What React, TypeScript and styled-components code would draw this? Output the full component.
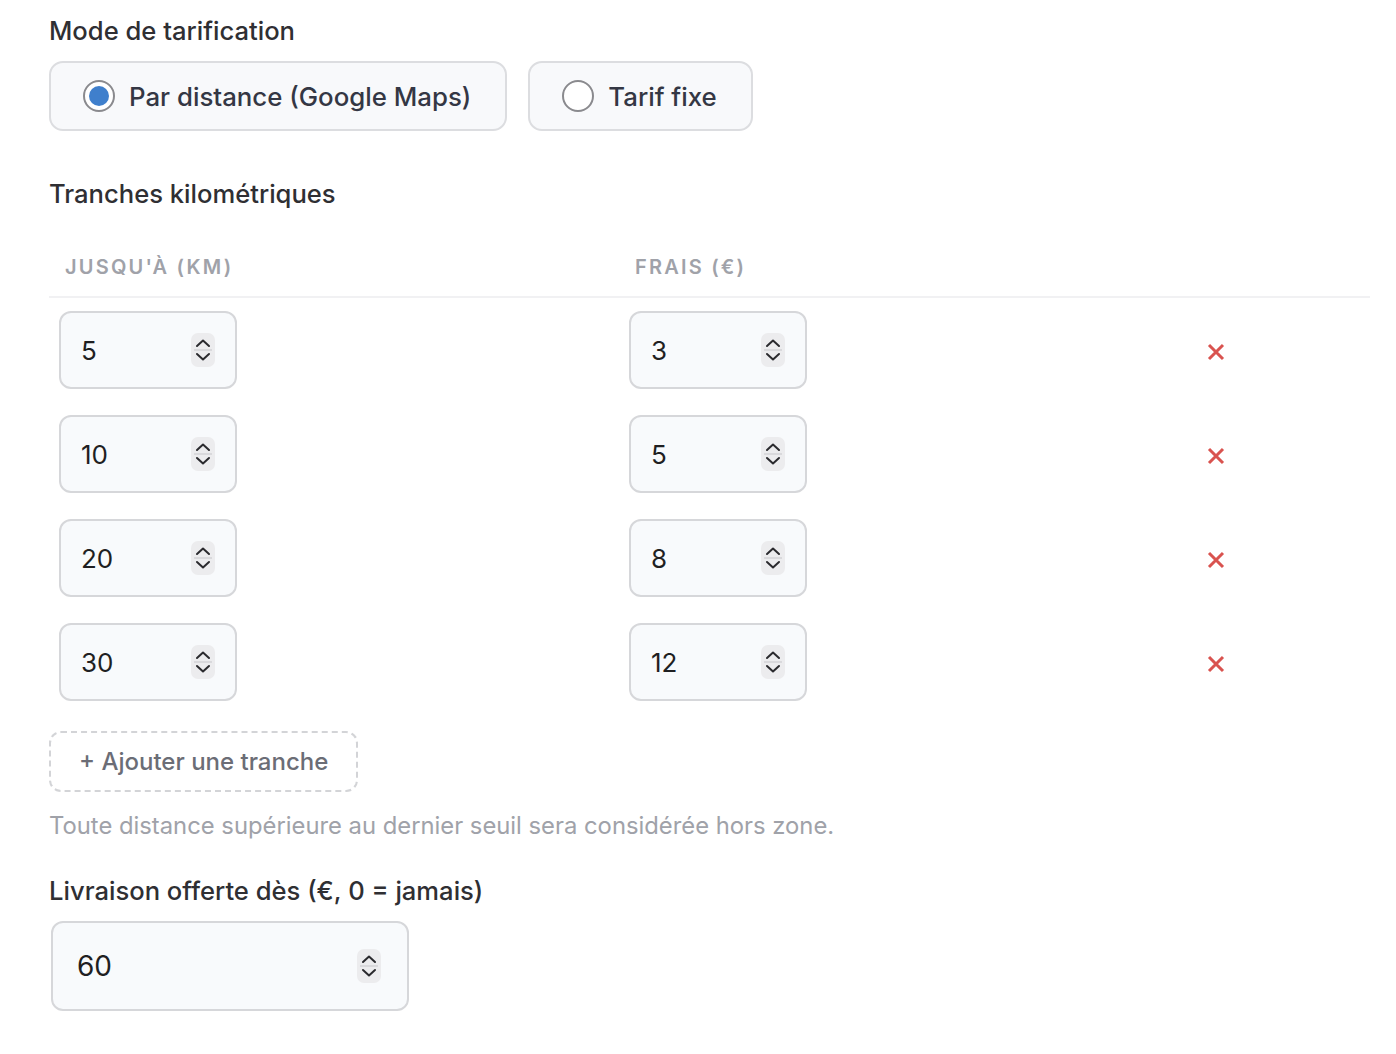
import React from 'react'
import styled, { createGlobalStyle } from 'styled-components'

const GlobalStyle = createGlobalStyle`
	body {
		margin: 0;
		background: #ffffff;
		font-family: Inter, 'Noto Sans', sans-serif;
		color: #2f2f33;
	}
`

const Page = styled.main`
	display: flex;
	flex-direction: column;
	padding: 14px 26px 0 49px;
`

const Label = styled.h3`
	margin: 0;
	font-size: 25.6px;
	font-weight: 500;
	line-height: 34px;
	color: #2f2f33;
`

const RadioGroup = styled.div`
	display: flex;
	gap: 21px;
	margin-top: 13px;
`

const RadioCard = styled.label`
	display: flex;
	align-items: center;
	gap: 14px;
	height: 70px;
	box-sizing: border-box;
	padding: 0 34px 0 32px;
	border: 2px solid #dcdde0;
	border-radius: 14px;
	background: #f8f9fb;
	font-size: 25.8px;
	font-weight: 500;
	color: #343744;
	cursor: pointer;
`

const RadioDot = styled.span<{ $checked?: boolean }>`
	width: 32px;
	height: 32px;
	box-sizing: border-box;
	border-radius: 50%;
	border: 2px solid #8a8a8e;
	background: #ffffff;
	display: flex;
	align-items: center;
	justify-content: center;

	&::after {
		content: '';
		width: 20px;
		height: 20px;
		border-radius: 50%;
		background: ${({ $checked }) => ($checked ? '#3f7fcc' : 'transparent')};
	}
`

const SectionTitle = styled(Label)`
	margin-top: 46px;
`

const Table = styled.div`
	display: grid;
	grid-template-columns: 570px 570px 1fr;
	margin-top: 42px;
`

const HeadCell = styled.div`
	padding: 0 16px 15px;
	border-bottom: 2px solid #f1f1f3;
	font-size: 20px;
	font-weight: 600;
	letter-spacing: 2.2px;
	text-transform: uppercase;
	color: #a0a2a9;
	line-height: 28px;
`

const Cell = styled.div`
	padding: 13px 10px;
	display: flex;
	align-items: center;
`

const NumberBox = styled.div<{ $width: number; $height: number; $large?: boolean }>`
	display: flex;
	align-items: center;
	justify-content: space-between;
	width: ${({ $width }) => $width}px;
	height: ${({ $height }) => $height}px;
	box-sizing: border-box;
	padding: ${({ $large }) => ($large ? '0 26px 0 24px' : '0 20px 0 20px')};
	border: 2px solid #d6d7da;
	border-radius: 12px;
	background: #f8fafc;
	font-size: ${({ $large }) => ($large ? 28 : 26)}px;
	color: #1f1f22;
`

const Spinner = styled.span`
	display: flex;
	flex-direction: column;
	align-items: center;
	justify-content: center;
	width: 24px;
	height: 34px;
	border-radius: 7px;
	background: #ececee;
	color: #2a2a2e;

	svg {
		display: block;
	}
`

const SpinDivider = styled.span`
	width: 18px;
	height: 2px;
	background: #d9d9dc;
	margin: 1px 0;
`

const DeleteCell = styled(Cell)`
	padding-left: 18px;
	padding-top: 17px;
`

const DeleteButton = styled.button`
	border: none;
	background: none;
	padding: 0;
	color: #d9534f;
	cursor: pointer;
	display: flex;
`

const AddButton = styled.button`
	align-self: flex-start;
	margin-top: 17px;
	height: 61px;
	padding: 0 28px;
	border: 2px dashed #d3d4d7;
	border-radius: 12px;
	background: #ffffff;
	font-family: inherit;
	font-size: 24px;
	font-weight: 500;
	color: #6b6d76;
	cursor: pointer;
`

const Hint = styled.p`
	margin: 18px 0 0;
	font-size: 23.8px;
	line-height: 32px;
	color: #a0a2a9;
`

const FreeLabel = styled(Label)`
	margin-top: 32px;
`

const FreeField = styled.div`
	margin-top: 13px;
	padding-left: 2px;
`

const Chevron = ({ up }: { up?: boolean }) => (
	<svg width="16" height="10" viewBox="0 0 16 10" fill="none">
		<path
			d={up ? 'M2 8 L8 2.5 L14 8' : 'M2 2 L8 7.5 L14 2'}
			stroke="currentColor"
			strokeWidth="2"
			strokeLinecap="round"
			strokeLinejoin="round"
		/>
	</svg>
)

const Stepper = () => (
	<Spinner>
		<Chevron up />
		<SpinDivider />
		<Chevron />
	</Spinner>
)

const Cross = () => (
	<svg width="18" height="18" viewBox="0 0 18 18">
		<path d="M2 2 L16 16 M16 2 L2 16" stroke="currentColor" strokeWidth="3" />
	</svg>
)

const tiers = [
	{ km: 5, fee: 3 },
	{ km: 10, fee: 5 },
	{ km: 20, fee: 8 },
	{ km: 30, fee: 12 },
]

export default function App() {
	return (
		<>
			<GlobalStyle />
			<Page>
				<Label>Mode de tarification</Label>
				<RadioGroup>
					<RadioCard>
						<RadioDot $checked />
						Par distance (Google Maps)
					</RadioCard>
					<RadioCard>
						<RadioDot />
						Tarif fixe
					</RadioCard>
				</RadioGroup>

				<SectionTitle>Tranches kilométriques</SectionTitle>
				<Table>
					<HeadCell>Jusqu'à (km)</HeadCell>
					<HeadCell>Frais (€)</HeadCell>
					<HeadCell />
					{tiers.map((t) => (
						<React.Fragment key={t.km}>
							<Cell>
								<NumberBox $width={178} $height={78}>
									{t.km}
									<Stepper />
								</NumberBox>
							</Cell>
							<Cell>
								<NumberBox $width={178} $height={78}>
									{t.fee}
									<Stepper />
								</NumberBox>
							</Cell>
							<DeleteCell>
								<DeleteButton aria-label="Supprimer">
									<Cross />
								</DeleteButton>
							</DeleteCell>
						</React.Fragment>
					))}
				</Table>

				<AddButton>+ Ajouter une tranche</AddButton>
				<Hint>Toute distance supérieure au dernier seuil sera considérée hors zone.</Hint>

				<FreeLabel>Livraison offerte dès (€, 0 = jamais)</FreeLabel>
				<FreeField>
					<NumberBox $width={358} $height={90} $large>
						60
						<Stepper />
					</NumberBox>
				</FreeField>
			</Page>
		</>
	)
}
